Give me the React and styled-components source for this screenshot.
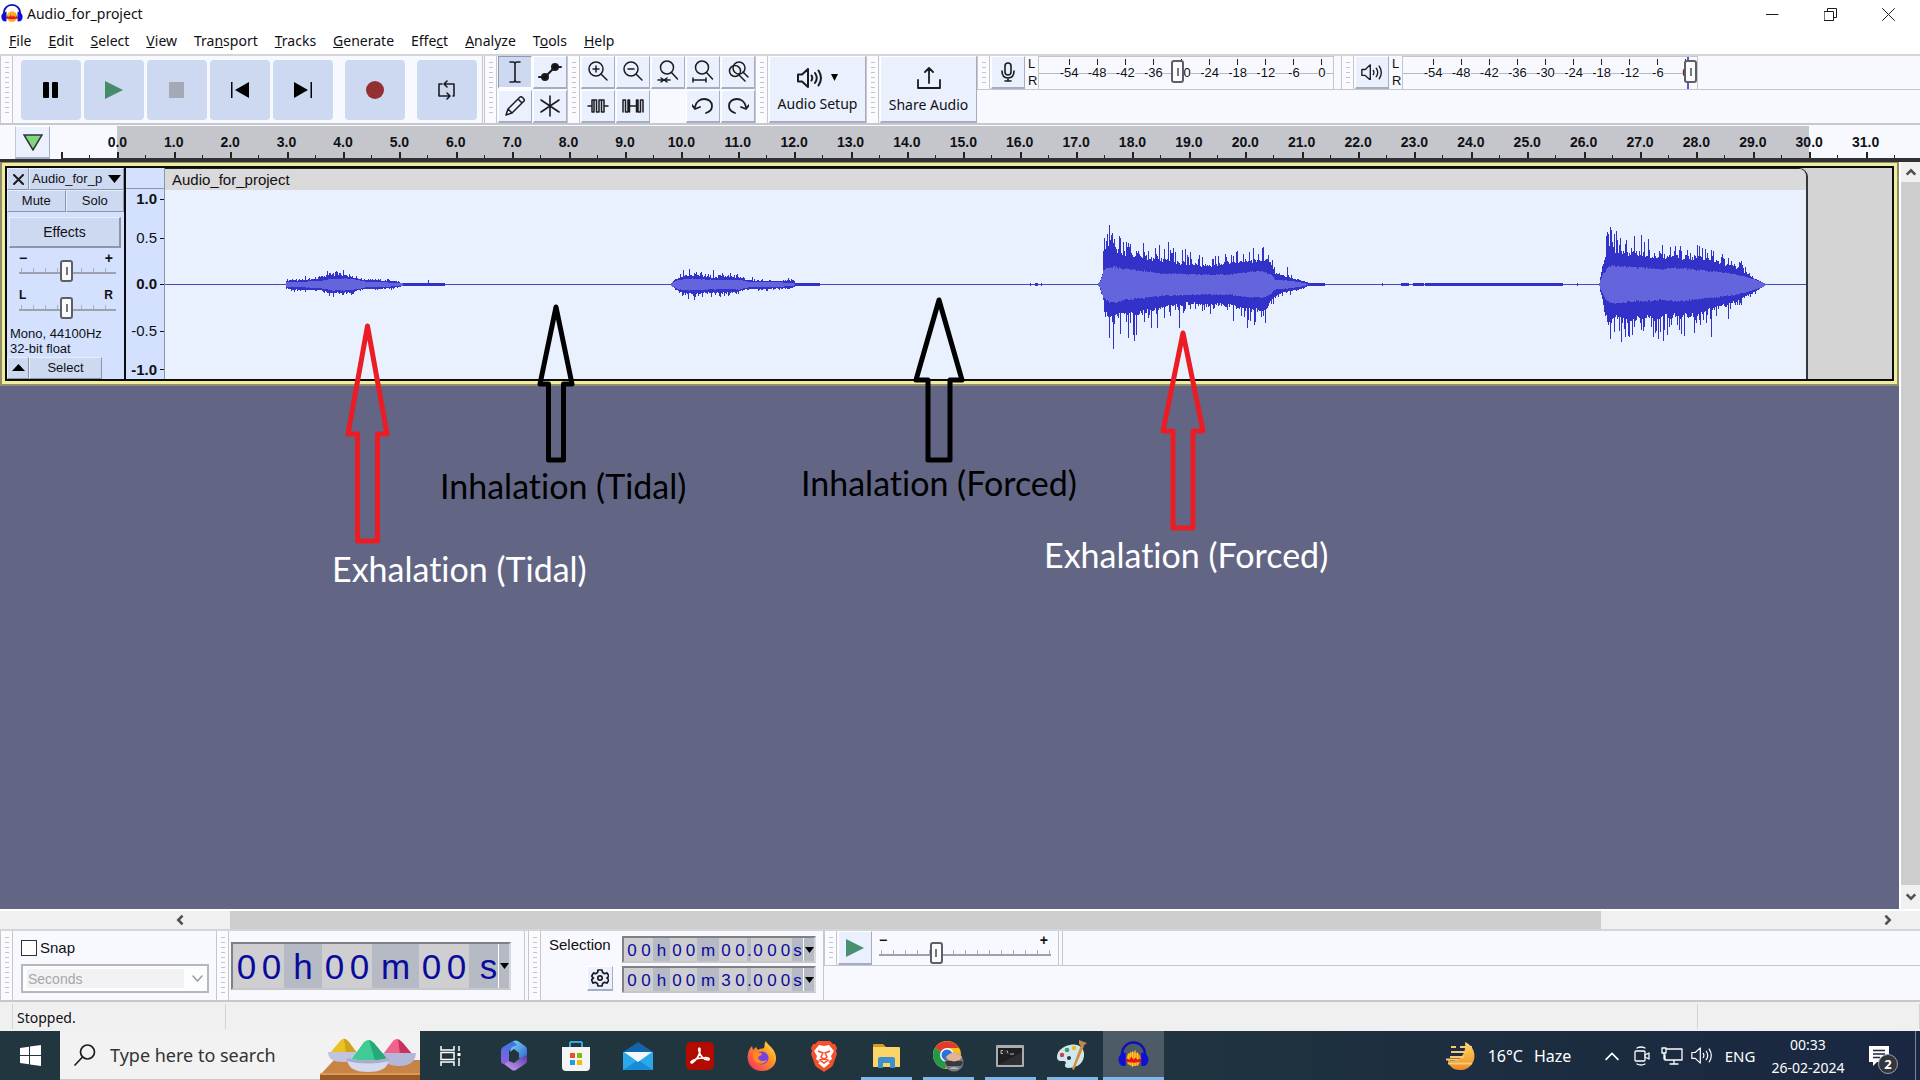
import React from "react";
import styled, { createGlobalStyle } from "styled-components";

const SANS = `"Liberation Sans", Arial, sans-serif`;
const UI = `"Noto Sans", "Open Sans", sans-serif`;

const Global = createGlobalStyle`
  * { box-sizing: border-box; }
  html, body, #root { height: 100%; margin: 0; }
  body { overflow: hidden; background: #f0f0f0; color: #101014; }
  button, input, select { font: inherit; color: inherit; margin: 0; padding: 0; }
  svg { display: block; flex: none; }
`;

const Shell = styled.div`
  display: flex;
  flex-direction: column;
  height: 100vh;
  font: 15px/20px ${UI};
`;

/* ---------- window chrome ---------- */
const TitleBar = styled.header`
  display: flex;
  align-items: center;
  height: 28px;
  padding: 0 3px 0 1px;
  background: #fff;
`;
const TitleText = styled.h1`
  flex: 1;
  margin: 0;
  padding-left: 4px;
  font: 14px/20px ${UI};
`;
const WinButton = styled.button`
  display: grid;
  place-items: center;
  width: 58px;
  height: 28px;
  border: 0;
  background: none;
`;
const MenuBar = styled.nav`
  display: flex;
  align-items: center;
  height: 26px;
  padding-left: 9px;
  gap: 17px;
  background: #fff;
  font-size: 14px;
`;
const MenuItem = styled.a`
  color: inherit;
  text-decoration: none;
  white-space: nowrap;
`;

/* ---------- toolbars ---------- */
const Toolbars = styled.section`
  display: flex;
  height: 71px;
  border-top: 2px solid #d4d5d8;
  border-bottom: 2px solid #c6c8ce;
  background: #f8f9fe;
`;
const Grabber = styled.div`
  flex: none;
  width: 13px;
  padding: 6px 3px 6px 4px;
  border-left: 1px solid #c6c7ca;
  border-right: 1px solid #c6c7ca;
  margin-right: 1px;
  background: #fbfbff;
  &::before {
    content: "";
    display: block;
    height: 100%;
    background: repeating-linear-gradient(#c3c5cc 0 1px, transparent 1px 5px);
  }
`;
const Transport = styled.div`
  display: flex;
  align-items: center;
  padding: 0 5px 0 7px;
  gap: 3px;
  border-right: 1px solid #c6c7ca;
  margin-right: 1px;
`;
const BigButton = styled.button`
  display: grid;
  place-items: center;
  width: 60px;
  height: 60px;
  margin-left: ${(p) => (p.$apart ? "9px" : "0")};
  border: 0;
  border-radius: 4px;
  background: #cdd9f0;
`;
const ToolGrid = styled.div`
  display: grid;
  grid-template-columns: repeat(${(p) => p.$cols}, 34px);
  grid-template-rows: 33px 33px;
  gap: 1px;
`;
const Tool = styled.button`
  display: grid;
  place-items: center;
  border: 1px solid #fff;
  border-right: 1px solid #a5adc0;
  border-bottom: 2px solid #a5adc0;
  background: ${(p) => (p.$on ? "#cdd9f0" : "#eaf0fd")};
  ${(p) => p.$on && "border-color: #8e98b0 #fff #fff #8e98b0;"}
`;
const WideButton = styled(Tool)`
  align-content: center;
  gap: 6px;
  width: 97px;
  padding-top: 3px;
  font-size: 14px;
`;
const IconPair = styled.span`
  display: flex;
  align-items: center;
  gap: 8px;
`;
const MeterArea = styled.div`
  flex: 1;
  display: flex;
  flex-direction: column;
`;
const MeterRow = styled.div`
  display: flex;
  height: 34px;
  border-bottom: 1px solid #c6c7ca;
`;
const MeterButton = styled(Tool)`
  width: 34px;
`;
const Channels = styled.div`
  display: flex;
  flex-direction: column;
  justify-content: space-between;
  width: 14px;
  padding: 0 0 1px 3px;
  border-right: 1px solid #c6c7ca;
  font: 13px/15px ${SANS};
`;
const Meter = styled.div`
  position: relative;
  width: 295px;
  height: 33px;
  padding-left: 16px;
  margin-right: 7px;
  overflow: hidden;
  border-right: 1px solid #c6c7ca;
  border-top: 1px solid #c6c7ca;
  background:
    linear-gradient(#5a5ad0, #5a5ad0) 284px 0 / ${(p) => (p.$peak ? 2 : 0)}px 100% no-repeat,
    linear-gradient(#b9bbc2, #b9bbc2) 0 16px / 100% 1px no-repeat;
`;
const MeterScale = styled.div`
  display: grid;
  grid-template-columns: repeat(10, 1fr);
  width: 281px;
`;
const MeterMark = styled.div`
  display: flex;
  flex-direction: column;
  align-items: center;
  font: 13px/14px ${SANS};
  &::before {
    content: "";
    width: 1px;
    height: 6px;
    margin: 2px 0 1px;
    background: #222;
  }
`;
const MeterLabel = styled.span`
  background: #f8f9fe;
`;
const thumb = (w, h) => `
  -webkit-appearance: none;
  width: ${w}px;
  height: ${h}px;
  border: 2px solid #5c5f66;
  border-radius: 3px;
  background: linear-gradient(#777, #777) center / 2px 8px no-repeat #fbfbfd;
`;
const MeterSlider = styled.input`
  position: absolute;
  left: 0;
  top: 3px;
  width: 100%;
  height: 23px;
  -webkit-appearance: none;
  background: none;
  &::-webkit-slider-thumb { ${thumb(13, 23)} }
`;

/* ---------- timeline ---------- */
const Timeline = styled.div`
  display: flex;
  height: 37px;
  padding: 1px 0 0 15px;
  border-bottom: 3px solid #2e3034;
  background: #f8f9fe;
  overflow: hidden;
`;
const PinButton = styled(Tool)`
  width: 35px;
  margin-right: 11px;
  border-left: 1px solid #c6c7ca;
`;
const RulerScale = styled.div`
  flex: 1;
  display: grid;
  grid-template-columns: repeat(33, 1fr);
  margin-right: -2px;
  font: bold 14px/20px ${SANS};
`;
const RulerCell = styled.div`
  display: flex;
  align-items: flex-end;
  position: relative;
  min-width: 0;
  border-bottom: 1px solid #333;
  background: ${(p) => (p.$sel ? "#c5c6cb" : "transparent")};
  &::before, &::after {
    content: "";
    width: 2px;
    height: 6px;
    background: #222;
  }
  &::after {
    height: 3px;
    width: 1px;
    margin-left: 26px;
  }
`;
const RulerLabel = styled.span`
  position: absolute;
  left: 0;
  top: 6px;
  transform: translateX(-50%);
  z-index: 1;
`;

/* ---------- track area ---------- */
const Workspace = styled.main`
  position: relative;
  flex: 1;
  display: flex;
  min-height: 0;
  background: #626684;
`;
const Canvas = styled.div`
  flex: 1;
  min-width: 0;
`;
const Track = styled.section`
  display: flex;
  height: 224px;
  border: 2px solid #8f8f6c;
  border-top-width: 1px;
  padding: 3px;
  background: #f0ee9c;
`;
const TrackInner = styled.div`
  flex: 1;
  display: flex;
  border: 2px solid #0c0c0c;
  background: #d4d4d4;
  min-width: 0;
`;
const Panel = styled.div`
  width: 119px;
  display: flex;
  flex-direction: column;
  border-right: 2px solid #0c0c0c;
  background: #d3e1fe;
  font: 13px/16px ${SANS};
`;
const PanelRow = styled.div`
  display: flex;
  height: 22px;
  flex: none;
`;
const Flat = styled.button`
  flex: ${(p) => (p.$w ? "none" : "1")};
  width: ${(p) => (p.$w ? p.$w + "px" : "auto")};
  display: flex;
  align-items: center;
  justify-content: center;
  border: 1px solid #e6eefe;
  border-right-color: #8d95a8;
  border-bottom-color: #8d95a8;
  background: #cdd9f0;
`;
const NameButton = styled(Flat)`
  justify-content: space-between;
  padding: 0 2px 0 2px;
`;
const EffectsButton = styled(Flat)`
  flex: none;
  height: 31px;
  margin: 5px 3px 4px 2px;
  border-width: 1px 2px 2px 1px;
  font-size: 14px;
`;
const SliderBlock = styled.label`
  display: flex;
  flex-direction: column;
  height: 37px;
  padding: 0 8px 0 12px;
`;
const Ends = styled.span`
  display: flex;
  justify-content: space-between;
  padding-right: 3px;
  font: bold ${(p) => (p.$big ? "14px" : "12px")}/12px ${SANS};
  height: 12px;
`;
const Slider = styled.input`
  -webkit-appearance: none;
  width: 100%;
  height: 22px;
  margin-top: ${(p) => p.$up || 0}px !important;
  background:
    linear-gradient(#9da1ab, #9da1ab) 0 12px / 100% 2px no-repeat,
    repeating-linear-gradient(90deg, #aab0bd 0 1px, transparent 1px 12px) 2px 8px / 100% 5px no-repeat;
  &::-webkit-slider-thumb { ${thumb(13, 22)} }
`;
const Info = styled.p`
  margin: 0;
  padding: 1px 0 0 3px;
  height: 32px;
  font: 13px/15px ${SANS};
`;
const VScale = styled.div`
  width: 39px;
  display: flex;
  flex-direction: column;
  background: #d3e1fe;
  border-right: 1px solid #8d95a8;
  font: 15px/16px ${SANS};
`;
const VTop = styled.div`
  height: 21px;
  border-bottom: 1px solid #8d95a8;
`;
const VMarks = styled.div`
  flex: 1;
  display: grid;
  grid-template-rows: 20px 58px 34px 60px 17px;
  align-items: center;
`;
const VMark = styled.div`
  display: flex;
  align-items: center;
  justify-content: flex-end;
  gap: 3px;
  font-weight: ${(p) => (p.$b ? "bold" : "normal")};
  &::after {
    content: "";
    width: 4px;
    height: 1px;
    background: #111;
  }
`;
const Clip = styled.article`
  flex: 1;
  min-width: 0;
  display: flex;
  flex-direction: column;
  margin-right: 84px;
  border-top: 1px solid #222;
  border-right: 2px solid #33363c;
  border-top-right-radius: 9px;
  overflow: hidden;
  background: #e9f1ff;
`;
const ClipTitle = styled.h2`
  height: 21px;
  margin: 0;
  padding: 1px 0 0 7px;
  background: #dadada;
  font: 15px/20px ${SANS};
`;
const WaveSvg = styled.svg`
  flex: 1;
  width: 100%;
  min-height: 0;
`;
const VScroll = styled.div`
  width: 21px;
  display: flex;
  flex-direction: column;
  border-left: 2px solid #fff;
  background: #f0f0f0;
`;
const ScrollButton = styled.button`
  display: grid;
  place-items: center;
  flex: none;
  width: ${(p) => p.$w}px;
  height: ${(p) => p.$h}px;
  border: 0;
  background: none;
`;
const VThumb = styled.div`
  flex: 1;
  background: #cdcdcd;
`;
const HScroll = styled.div`
  display: flex;
  height: 22px;
  padding: 0 22px 0 170px;
  border-top: 2px solid #fff;
  border-bottom: 2px solid #d4d5d8;
  background: #f0f0f0;
`;
const HTrack = styled.div`
  flex: 1;
  padding: 0 277px 0 40px;
`;
const HThumb = styled.div`
  height: 100%;
  background: #cdcdcd;
`;

/* ---------- annotations drawn on the canvas ---------- */
const Arrow = styled.svg`
  position: absolute;
  left: ${(p) => p.$x}px;
  top: ${(p) => p.$y}px;
  overflow: visible;
`;
const Note = styled.p`
  position: absolute;
  left: ${(p) => p.$x}px;
  top: ${(p) => p.$y}px;
  margin: 0;
  color: ${(p) => p.$c};
  font: 34px/40px Lato, sans-serif;
  font-variant-ligatures: none;
  white-space: nowrap;
`;

/* ---------- bottom bars ---------- */
const BottomBars = styled.section`
  display: flex;
  height: 71px;
  border-bottom: 2px solid #c6c7ca;
  background: #f8f9fe;
`;
const SnapPanel = styled.div`
  display: flex;
  flex-direction: column;
  width: 202px;
  padding: 7px 7px 0 7px;
  gap: 6px;
  font: 14px/20px ${SANS};
`;
const Check = styled.label`
  display: flex;
  align-items: center;
  gap: 3px;
  font-size: 15px;
  input {
    -webkit-appearance: none;
    width: 16px;
    height: 16px;
    border: 1px solid #333;
    background: #fff;
  }
`;
const Combo = styled.div`
  position: relative;
  svg { position: absolute; right: 6px; top: 11px; pointer-events: none; }
`;
const ComboSelect = styled.select`
  -webkit-appearance: none;
  display: block;
  width: 100%;
  height: 29px;
  padding-left: 5px;
  border: 2px solid #9b9ca0;
  border-radius: 0;
  background: linear-gradient(#f0f0f0, #f0f0f0) 4px 3px / 157px 19px no-repeat #fff;
  color: #82848a;
  font-size: 14px;
`;
const TimePanel = styled.div`
  display: flex;
  align-items: center;
  padding: 0 13px 0 1px;
  border-right: 1px solid #c6c7ca;
  margin-right: 3px;
`;
const TimeBox = styled.div`
  display: flex;
  height: ${(p) => (p.$big ? 48 : 27)}px;
  border: 2px solid #7e8085;
  border-right-color: #d6d8dd;
  border-bottom-color: #c6c7ca;
  color: #0a0a9c;
  background: #b5bac5;
  font: ${(p) => (p.$big ? "35px/46px" : "17px/25px")} ${SANS};
`;
const Cell = styled.span`
  width: ${(p) => p.$w}px;
  text-align: center;
  background: ${(p) => (p.$d ? "#cfcfd1" : "transparent")};
`;
const Drop = styled.button`
  display: grid;
  place-items: center;
  width: 11px;
  border: 0;
  border-left: 1px solid #fff;
  background: #b5bac5;
`;
const SelectionPanel = styled.div`
  display: flex;
  gap: 9px;
  padding: 4px 7px 0 7px;
  border-right: 1px solid #c6c7ca;
`;
const SelLabels = styled.div`
  display: flex;
  flex-direction: column;
  width: 64px;
  gap: 11px;
  font: 15px/20px ${SANS};
`;
const GearButton = styled(Tool)`
  align-self: flex-end;
  width: 26px;
  height: 25px;
`;
const TimeStack = styled.div`
  display: flex;
  flex-direction: column;
  padding-top: 1px;
  gap: 3px;
`;
const SpeedArea = styled.div`
  flex: 1;
`;
const SpeedRow = styled.div`
  display: flex;
  height: 35px;
  border-bottom: 1px solid #c6c7ca;
`;
const SpeedButton = styled(Tool)`
  width: 34px;
`;
const SpeedSlider = styled.label`
  display: flex;
  flex-direction: column;
  width: 187px;
  padding: 3px 7px 0 7px;
  border-right: 1px solid #c6c7ca;
`;
const RowEnd = styled.div`
  width: 4px;
  border-right: 1px solid #c6c7ca;
`;
const StatusBar = styled.footer`
  display: flex;
  align-items: center;
  height: 29px;
  padding: 2px 0;
  background: #f0f0f0;
  font-size: 14px;
`;
const StatusCell = styled.div`
  height: 100%;
  flex: ${(p) => (p.$w ? "none" : "1")};
  width: ${(p) => (p.$w ? p.$w + "px" : "auto")};
  padding: 4px 0 0 4px;
  border-right: 1px solid #d4d4d6;
`;

/* ---------- taskbar ---------- */
const Taskbar = styled.nav`
  display: flex;
  flex: none;
  height: 49px;
  background: linear-gradient(90deg, #22363f 0%, #20343f 60%, #1b2b40 85%, #1a2742 100%);
  color: #fff;
`;
const StartButton = styled.button`
  display: grid;
  place-items: center;
  width: 60px;
  border: 0;
  background: none;
`;
const Search = styled.label`
  display: flex;
  align-items: center;
  width: 360px;
  padding-left: 14px;
  gap: 14px;
  background: #f2f2f2;
  border-bottom: 1px solid #c8cccf;
  color: #222;
`;
const SearchInput = styled.input`
  flex: 1;
  min-width: 0;
  border: 0;
  background: none;
  font: 18px/24px ${UI};
  &::placeholder { color: #333; opacity: 1; }
`;
const Apps = styled.div`
  display: flex;
  flex: 1;
  padding-left: 1px;
`;
const AppButton = styled.button`
  display: grid;
  place-items: center;
  width: ${(p) => (p.$on ? 61 : 62)}px;
  border: 0;
  background:
    ${(p) => (p.$open ? `linear-gradient(#7fb9ea, #7fb9ea) center bottom / ${p.$on ? 61 : 51}px 3px no-repeat` : "none")}
    ${(p) => (p.$on ? "#4d5b66" : "transparent")};
`;
const Tray = styled.div`
  display: flex;
  align-items: center;
  font: 16px/20px ${UI};
`;
const TrayButton = styled.button`
  display: flex;
  align-items: center;
  justify-content: center;
  gap: 11px;
  width: ${(p) => p.$w}px;
  height: 100%;
  border: 0;
  background: none;
  font-size: ${(p) => p.$fs || 16}px;
  white-space: nowrap;
`;
const Clock = styled.button`
  display: flex;
  flex-direction: column;
  justify-content: center;
  align-items: center;
  width: 90px;
  height: 100%;
  border: 0;
  background: none;
  font: 14px/23px ${UI};
`;
const Notices = styled.button`
  position: relative;
  display: flex;
  align-items: center;
  width: 62px;
  height: 100%;
  padding-left: 16px;
  border: 0;
  background: none;
`;
const Badge = styled.span`
  position: absolute;
  left: 25px;
  top: 23px;
  width: 20px;
  height: 20px;
  border: 1px solid #9aa0a6;
  border-radius: 50%;
  background: #32363c;
  font: bold 13px/18px ${UI};
`;
const Peek = styled.div`
  width: 5px;
  height: 100%;
  border-left: 1px solid #7d8794;
`;

/* ---------- icons ---------- */
const Ic = ({ w = 24, h, sw = 2, children, ...r }) => (
  <svg width={w} height={h || w} viewBox={`0 0 ${w} ${h || w}`} fill="none" stroke="#1c1c20" strokeWidth={sw} strokeLinecap="round" strokeLinejoin="round" aria-hidden="true" {...r}>
    {children}
  </svg>
);
const Logo = ({ s = 22 }) => (
  <svg width={s} height={s} viewBox="0 0 30 30" aria-hidden="true">
    <path d="M4 16C2 -2 28 -2 26 16" fill="none" stroke="#1010b8" strokeWidth="2.400" />
    <circle cx="15" cy="18.500" r="7" fill="#f79a12" />
    <path d="M10 13v10M12 12v12M14 11v15M16.500 10v15M19 12v13" stroke="#ffc93c" strokeWidth="1" />
    <path d="M7 19l2-1 2 1 2-3 2 3 2-2 2 2 2-1 2 1v2l-8 1-8-1z" fill="#e01818" />
    <path d="M7.500 12v13c-4 1-7-2-7-6s3-7 7-7zM22.500 12v13c4 1 7-2 7-6s-3-7-7-7z" fill="#1010d4" />
  </svg>
);
const Speaker = ({ s = 26, c = "#1c1c20", sw = 2 }) => (
  <svg width={s} height={(s * 20) / 26} viewBox="0 0 26 20" fill="none" stroke={c} strokeWidth={sw} strokeLinecap="round" strokeLinejoin="round" aria-hidden="true">
    <path d="M1 6.500h4l6-5.500v18l-6-5.500H1z" />
    <path d="M14.500 7.500q1.500 2.500 0 5M18 5q3.500 5 0 10M21.500 2.500q5 7.500 0 15" />
  </svg>
);
const Lens = ({ children }) => (
  <Ic w={24} sw={1.5}>
    <circle cx="10" cy="9" r="7" />
    <path d="M15 14l6 6" />
    {children}
  </Ic>
);
const FitLens = ({ children }) => (
  <Ic w={24} sw={1.5}>
    <circle cx="11" cy="7.500" r="6.500" />
    <path d="M15.500 12.500l6 6.500" />
    {children}
  </Ic>
);
const Chevron = ({ r = 0, c = "#505054", sw = 3, w = 14 }) => (
  <svg width={w} height={w} viewBox="0 0 14 14" fill="none" stroke={c} strokeWidth={sw} transform={`rotate(${r})`} aria-hidden="true">
    <path d="M2 10L7 5l5 5" />
  </svg>
);
const Tri = ({ w = 9, h = 6, up }) => (
  <svg width={w} height={h} viewBox="0 0 10 6" preserveAspectRatio="none" aria-hidden="true">
    <path d={up ? "M0 6h10L5 0z" : "M0 0h10L5 6z"} fill="#000" />
  </svg>
);

/* ---------- waveform ---------- */
// Each burst lists envelope knots [x, height] for peaks above, peaks below and rms, plus single tall samples.
const BURSTS = [
  {
    up: [[286, 3], [290, 4], [305, 4], [320, 6], [328, 9], [345, 9], [356, 6], [364, 4], [380, 4], [395, 3], [399, 2], [402, 1], [444, 1]],
    dn: [[286, 3], [292, 5], [305, 5], [320, 5], [330, 9], [345, 8], [356, 6], [364, 4], [380, 4], [393, 3], [399, 2], [402, 1], [444, 1]],
    rms: [[286, 2], [300, 2], [320, 3], [332, 5], [345, 5], [356, 4], [366, 2], [380, 2], [395, 1], [402, 1], [403, 0], [444, 0]],
    su: { 287: 5, 305: 8, 327: 13, 336: 13, 343: 14, 349: 10, 388: 5, 428: 4 },
    sd: { 294: 7, 333: 12, 343: 10, 391: 5 },
  },
  {
    up: [[671, 1], [676, 5], [684, 9], [695, 9], [712, 7], [725, 8], [738, 7], [746, 4], [770, 3], [792, 4], [795, 1], [819, 1]],
    dn: [[671, 1], [676, 5], [684, 9], [695, 9], [712, 8], [725, 8], [738, 7], [746, 4], [770, 4], [792, 3], [795, 1], [819, 1]],
    rms: [[671, 1], [678, 4], [690, 5], [712, 4], [740, 4], [748, 2], [770, 2], [792, 1], [795, 0], [819, 0]],
    su: { 683: 14, 689: 15, 701: 12, 713: 14, 722: 11, 730: 11, 737: 10, 752: 7, 788: 6 },
    sd: { 688: 14, 694: 15, 711: 12, 720: 12, 728: 11, 766: 6 },
  },
  {
    up: [[1097, 0], [1100, 4], [1102, 9], [1104, 40], [1106, 38], [1118, 35], [1130, 31], [1145, 28], [1160, 26], [1175, 23], [1190, 21], [1205, 19], [1225, 22], [1240, 24], [1255, 25], [1268, 26], [1271, 20], [1275, 11], [1285, 8], [1295, 5], [1303, 3], [1308, 1], [1324, 1]],
    dn: [[1097, 0], [1100, 4], [1102, 10], [1105, 28], [1107, 34], [1115, 33], [1125, 30], [1135, 31], [1145, 28], [1160, 25], [1175, 22], [1190, 19], [1205, 21], [1215, 20], [1230, 22], [1240, 25], [1255, 27], [1265, 28], [1270, 17], [1275, 11], [1283, 8], [1295, 5], [1303, 3], [1308, 1], [1324, 1]],
    rms: [[1097, 0], [1100, 3], [1103, 12], [1106, 15], [1113, 16], [1125, 14], [1145, 12], [1160, 10], [1200, 9], [1230, 9], [1245, 11], [1262, 12], [1270, 9], [1275, 4], [1290, 3], [1303, 1], [1308, 0], [1324, 0]],
    su: { 1104: 46, 1107: 50, 1109: 59, 1112: 48, 1119: 48, 1123: 42, 1128: 41, 1130: 40, 1143: 41, 1159: 39, 1168: 42, 1173: 36, 1182: 34, 1185: 35, 1190: 32, 1199: 29, 1236: 32, 1253: 36, 1262: 36, 1263: 37, 1287: 17 },
    sd: { 1109: 53, 1113: 64, 1120: 49, 1128: 53, 1133: 50, 1134: 56, 1136: 50, 1151: 43, 1157: 43, 1179: 43, 1233: 36, 1247: 43, 1254: 40, 1265: 38, 1290: 10 },
  },
  {
    up: [[1599, 1], [1600, 6], [1602, 20], [1605, 28], [1607, 45], [1611, 42], [1615, 34], [1635, 32], [1650, 30], [1665, 29], [1680, 28], [1695, 28], [1705, 26], [1715, 24], [1725, 20], [1740, 16], [1747, 11], [1755, 5], [1760, 3], [1764, 1]],
    dn: [[1599, 1], [1602, 15], [1605, 32], [1608, 40], [1615, 34], [1625, 38], [1640, 34], [1655, 35], [1665, 33], [1680, 33], [1700, 30], [1712, 24], [1725, 22], [1735, 18], [1745, 12], [1755, 7], [1764, 1]],
    rms: [[1599, 1], [1602, 8], [1607, 15], [1611, 17], [1640, 15], [1660, 14], [1680, 15], [1700, 13], [1730, 10], [1745, 7], [1755, 4], [1764, 1]],
    su: { 1608: 50, 1611: 54, 1616: 53, 1620: 46, 1625: 40, 1634: 48, 1641: 49, 1648: 45, 1662: 39, 1675: 38, 1697: 39, 1702: 35, 1712: 28, 1722: 30, 1741: 23 },
    sd: { 1610: 54, 1621: 57, 1629: 52, 1632: 50, 1653: 52, 1658: 54, 1663: 56, 1667: 50, 1681: 49, 1684: 51, 1694: 48, 1711: 52, 1728: 34 },
  },
];
const FLAT = [[1030, 1030], [1035, 1037], [1041, 1041], [1382, 1382], [1401, 1408], [1413, 1423], [1425, 1562], [1577, 1577]];
const ORIGIN = 165;
const MID = 94;

const lerp = (k, x) => {
  for (let i = 1; i < k.length; i++) {
    if (x <= k[i][0]) {
      const [a, p] = k[i - 1];
      const [b, q] = k[i];
      return p + ((q - p) * (x - a)) / (b - a);
    }
  }
  return k[k.length - 1][1];
};
const noise = (n) => {
  const v = Math.sin(n * 12.9898) * 43758.5453;
  return v - Math.floor(v);
};
function wavePaths() {
  let peak = "";
  let rms = "";
  BURSTS.forEach((b) => {
    const end = b.up[b.up.length - 1][0];
    for (let x = b.up[0][0]; x <= end; x++) {
      const swing = (n) => {
        const r = noise(n);
        return r > 0.75 ? 1.1 + (r - 0.75) * 1.2 : 0.86 + r * 0.25;
      };
      const u = Math.max(b.su[x] || 0, lerp(b.up, x) * swing(x));
      const d = Math.max(b.sd[x] || 0, lerp(b.dn, x) * swing(x + 7000));
      const m = lerp(b.rms, x);
      const X = x - ORIGIN;
      peak += `M${X} ${(MID - u).toFixed(1)}h1V${(MID + 1 + d).toFixed(1)}h-1z`;
      if (m > 0) rms += `M${X} ${(MID - m - noise(x + 99) * m * 0.14).toFixed(1)}h1V${(MID + 1 + m + noise(x + 55) * m * 0.14).toFixed(1)}h-1z`;
    }
  });
  FLAT.forEach(([a, z]) => {
    peak += `M${a - ORIGIN} ${MID - 1}H${z - ORIGIN + 1}v3H${a - ORIGIN}z`;
  });
  return { peak, rms };
}
const WAVE = wavePaths();

const Waveform = () => (
  <WaveSvg viewBox="0 0 1641 189" preserveAspectRatio="none" role="img" aria-label="Waveform">
    <g shapeRendering="crispEdges">
      <rect x="0" y={MID} width="1641" height="1" fill="#4848bc" />
      <path d={WAVE.peak} fill="#3232c8" />
      <path d={WAVE.rms} fill="#6464dc" />
    </g>
  </WaveSvg>
);

const UpArrow = ({ x, y, w, h, head, shaft, color }) => {
  const l = (w - shaft) / 2;
  return (
    <Arrow $x={x} $y={y} width={w} height={h} fill="none" stroke={color} strokeWidth="5" strokeLinejoin="round" aria-hidden="true">
      <path d={`M${w / 2} 0L${w} ${head}H${w - l}V${h}H${l}V${head}H0z`} />
    </Arrow>
  );
};

/* ---------- taskbar pictures ---------- */
const pic = { width: 32, height: 32, viewBox: "0 0 32 32", "aria-hidden": true };
const TaskView = () => (
  <svg {...pic} fill="none" stroke="#fff" strokeWidth="1.500">
    <path d="M5 6v4h13V6M5 26v-4h13v4M5 12.500h13v7H5zM23 6v5M23 18v8" />
    <path d="M23 13v3" strokeWidth="3" />
  </svg>
);
const M365 = () => (
  <svg {...pic}>
    <defs>
      <linearGradient id="ma" x1="0" y1="0" x2="1" y2="1"><stop offset="0" stopColor="#7fd8fa" /><stop offset="1" stopColor="#2a62c9" /></linearGradient>
      <linearGradient id="mb" x1="0" y1="0" x2="0" y2="1"><stop offset="0" stopColor="#3a78e0" /><stop offset="1" stopColor="#8f5fe0" /></linearGradient>
      <linearGradient id="mc" x1="0" y1="1" x2="1" y2="0"><stop offset="0" stopColor="#d0a6f5" /><stop offset="1" stopColor="#5a35a8" /></linearGradient>
    </defs>
    <path d="M15 1L5 7q-2 1-2 4v10q0 3 3 3l5-2V12q0-2 2-3l7-4z" fill="url(#mb)" />
    <path d="M15 1q3-1 5 0l7 5q2 1 2 4v11l-8-3v-5l-5-4-4 3q0-3 2-5l5-2z" fill="url(#ma)" />
    <path d="M6 24l5-3 5 2 5-4 8-4v6q0 2-2 3l-9 6q-2 1-4 0z" fill="url(#mc)" />
  </svg>
);
const Store = () => (
  <svg {...pic}>
    <path d="M10 8V3q0-1 1-1h10q1 0 1 1v5" fill="none" stroke="#35a7e0" strokeWidth="2" />
    <path d="M2 7h28v20q0 4-4 4H6q-4 0-4-4z" fill="#f4f4f4" />
    <path d="M10 13h5v5h-5z" fill="#e8502a" /><path d="M17 13h5v5h-5z" fill="#86b918" />
    <path d="M10 20h5v5h-5z" fill="#1f9fe0" /><path d="M17 20h5v5h-5z" fill="#f7b80c" />
  </svg>
);
const Mail = () => (
  <svg {...pic}>
    <path d="M1 12L16 2l15 10v4H1z" fill="#1464ac" />
    <path d="M1 12h30v18H1z" fill="#2ba8ea" />
    <path d="M1 30l15-10 15 10z" fill="#168cd8" />
    <path d="M2 12h28L16 22z" fill="#f4f7fb" />
  </svg>
);
const Acrobat = () => (
  <svg {...pic}>
    <rect x="2" y="2" width="28" height="28" rx="5" fill="#b30b00" />
    <path d="M8 23c5-3 8-9 8-13 0-3-2-2-1 1 1 5 5 9 9 9 3-1 0-3-5-2-5 0-11 2-12 4 0 1 1 1 1 1z" fill="none" stroke="#fff" strokeWidth="1.700" />
  </svg>
);
const Firefox = () => (
  <svg {...pic}>
    <defs><linearGradient id="ff" x1="1" y1="0" x2="0" y2="1"><stop offset="0" stopColor="#fff04a" /><stop offset=".4" stopColor="#ff9422" /><stop offset="1" stopColor="#f0256c" /></linearGradient></defs>
    <path d="M20 1c1 3 6 6 8 10 6 11-2 20-12 20C6 31 0 23 2 14c0-3 2-6 4-8l1 4 3-3 2 3c2-2 5-1 6-2 1-2 0-5 2-7z" fill="url(#ff)" />
    <circle cx="16" cy="18" r="6.500" fill="#7542e5" />
    <path d="M7 13c3-2 5 0 8 0 2 1 0 3-3 4 0 4 5 5 9 3-2 5-10 5-13 0-1-3-1-5-1-7z" fill="#ff8a1f" />
  </svg>
);
const Brave = () => (
  <svg {...pic}>
    <path d="M10 1h12l3 3h2l2 4-1 3 1 3-4 11q-1 2-3 3l-6 4-6-4q-2-1-3-3L3 14l1-3-1-3 2-4h2z" fill="#f4502a" />
    <path d="M11 5l5 1 5-1 5 6-3 5 1 3-4 3 2 1-6 5-6-5 2-1-4-3 1-3-3-5z" fill="#fff" />
    <path d="M10 11l5 2-2 4 3 2 3-2-2-4 5-2M12 20l4-1 4 1-4 3z" fill="none" stroke="#f4502a" strokeWidth="1.500" />
  </svg>
);
const Explorer = () => (
  <svg {...pic}>
    <path d="M3 5q0-1 1-1h9l3 3H3z" fill="#d79b16" />
    <path d="M3 7h26q1 0 1 1v19H3z" fill="#fbd568" />
    <path d="M8 28V19q0-2 2-2h13q2 0 2 2v9h-5v-5h-7v5z" fill="#3d8fd0" />
  </svg>
);
const Chrome = () => (
  <svg {...pic}>
    <circle cx="15" cy="15" r="14" fill="#f9c21b" />
    <path d="M15 15L2.900 8A14 14 0 0 1 27 8H15z" fill="#e23b2e" />
    <path d="M15 15L2.900 8a14 14 0 0 0 10 20.800L20 19z" fill="#249a48" />
    <circle cx="15" cy="15" r="7" fill="#fff" /><circle cx="15" cy="15" r="5.500" fill="#2c6fe0" />
    <circle cx="22" cy="22" r="9.500" fill="#777b80" />
    <path d="M14 17q8-9 16 0l-3 4H17z" fill="#e0b597" />
    <path d="M13 22q4-3 9 0 5-3 9 0l-2 4H15z" fill="#36393d" />
    <path d="M17 29q5-4 10 0z" fill="#b5b9bd" />
  </svg>
);
const Cmd = () => (
  <svg {...pic}>
    <rect x="2" y="5" width="28" height="22" rx="1" fill="#a9adb0" />
    <rect x="4" y="8" width="24" height="17" fill="#1e1f21" />
    <path d="M9 10.500h-2v3h2M11 11v.5M11 13.500v.3M13 10.500l1 3M16 14h4" stroke="#bbb" strokeWidth="1" fill="none" />
    <path d="M4 25L28 12v13z" fill="#333538" opacity=".7" />
  </svg>
);
const Paint = () => (
  <svg {...pic}>
    <path d="M14 5c8-2 15 3 14 11-1 9-9 12-16 12-3 0-4-3-2-5 0-4-9 1-9-6 0-6 6-11 13-12z" fill="#cfe6f3" />
    <circle cx="6" cy="15" r="2.200" fill="#d63c3c" /><circle cx="11" cy="10" r="2.300" fill="#3aa35a" />
    <circle cx="18" cy="8" r="2.300" fill="#e9bf28" /><circle cx="13" cy="18" r="2" fill="#22343e" />
    <path d="M25 5l3 1-10 24-2-1z" fill="#d58e3a" /><path d="M23 0l8 3-5 4-3-3z" fill="#b98a52" />
  </svg>
);
const Holi = () => (
  <svg width="100" height="49" viewBox="0 0 100 49" aria-hidden="true">
    <path d="M0 44L14 29h86v20H0z" fill="#c88446" /><path d="M0 42h100v7H0z" fill="#9a5a26" /><path d="M0 42h100v2H0z" fill="#dc9a58" />
    <path d="M10 22L20 10q4-5 8 0l9 12z" fill="#ebc226" /><path d="M24 8q3 0 5 3l8 11H26z" fill="#cfa31c" />
    <path d="M8 21h30q0 10-15 10T8 21z" fill="#c0c4de" />
    <path d="M64 22L73 10q4-4 8 0l11 13z" fill="#f0648c" /><path d="M78 8l5 4 9 11H80z" fill="#c8325e" />
    <path d="M62 22h34q-1 13-17 13T62 22z" fill="#b4b8d8" />
    <path d="M31 29L44 11q5-4 9 0l15 18z" fill="#3ecb94" /><path d="M49 9l5 3 14 17H55z" fill="#27a878" />
    <path d="M27 27q21 5 42 0 0 14-21 14T27 27z" fill="#d5d8ee" />
    <path d="M27 27q21 5 42 0v3q-21 5-42 0z" fill="#a6abcf" />
  </svg>
);
const Moon = () => (
  <svg width="32" height="30" viewBox="0 0 32 30" aria-hidden="true">
    <defs><linearGradient id="mo" x1="0" y1="0" x2="0" y2="1"><stop offset="0" stopColor="#ffd95c" /><stop offset="1" stopColor="#ee8a28" /></linearGradient></defs>
    <path d="M20 1c14 6 12 26-3 28C8 30 3 24 3 19c8 3 19-3 17-18z" fill="url(#mo)" />
    <path d="M6 6h5M15 6h12M6 11h16M5 16h14M1 18.500h13M3 22.500h24" stroke="#f7c976" strokeWidth="2" />
  </svg>
);

/* ---------- content ---------- */
const MENUS = [["", "F", "ile"], ["", "E", "dit"], ["", "S", "elect"], ["", "V", "iew"], ["Tra", "n", "sport"], ["", "T", "racks"], ["", "G", "enerate"], ["Effe", "c", "t"], ["", "A", "nalyze"], ["T", "o", "ols"], ["", "H", "elp"]];
const DB = [-54, -48, -42, -36, -30, -24, -18, -12, -6, 0];
const TASKS = [
  ["Microsoft 365", M365], ["Microsoft Store", Store], ["Mail", Mail], ["Acrobat", Acrobat], ["Firefox", Firefox], ["Brave", Brave],
  ["File Explorer", Explorer, 1], ["Chrome", Chrome, 1], ["Command Prompt", Cmd, 1], ["Paint", Paint, 1],
];

const MeterBar = ({ name, value, icon, peak }) => (
  <>
    <Grabber />
    <MeterButton aria-label={name}>{icon}</MeterButton>
    <Channels><span>L</span><span>R</span></Channels>
    <Meter $peak={peak}>
      <MeterScale>
        {DB.map((d) => <MeterMark key={d}><MeterLabel>{d}</MeterLabel></MeterMark>)}
      </MeterScale>
      <MeterSlider type="range" aria-label={`${name} level`} defaultValue={value} />
    </Meter>
  </>
);

const TimeField = ({ big, cells, name }) => (
  <TimeBox $big={big} role="group" aria-label={name}>
    {cells.map(([t, w, d], i) => <Cell key={i} $w={w} $d={d}>{t}</Cell>)}
    <Drop aria-label={`${name} format`}><Tri w={9} h={6} /></Drop>
  </TimeBox>
);
const small = (sec) => [["", 1, 1], ["0", 14, 1], ["0", 14, 1], ["h", 17], ["0", 14, 1], ["0", 13, 1], ["m", 22], [sec, 14, 1], ["0", 14, 1], [".", 4], ["0", 14, 1], ["0", 14, 1], ["0", 13, 1], ["s", 11]];
const large = [["", 1, 1], ["0", 25, 1], ["0", 25, 1], ["h", 38], ["0", 25, 1], ["0", 25, 1], ["m", 47], ["0", 25, 1], ["0", 25, 1], ["", 10], ["s", 19]];

export default function App() {
  return (
    <Shell>
      <Global />
      <TitleBar>
        <Logo />
        <TitleText>Audio_for_project</TitleText>
        <WinButton aria-label="Minimize"><Ic w={13} sw={1}><path d="M0 6.500h12" /></Ic></WinButton>
        <WinButton aria-label="Restore"><Ic w={13} sw={1}><path d="M.5 3.500h9v9h-9zM3.500 3.500v-3h9v9h-3" /></Ic></WinButton>
        <WinButton aria-label="Close"><Ic w={13} sw={1}><path d="M.5.5l12 12M12.500.5l-12 12" /></Ic></WinButton>
      </TitleBar>
      <MenuBar>
        {MENUS.map(([a, u, b]) => <MenuItem key={a + u + b} href="#">{a}<u>{u}</u>{b}</MenuItem>)}
      </MenuBar>

      <Toolbars>
        <Grabber />
        <Transport>
          <BigButton aria-label="Pause"><svg width="16" height="16"><rect width="6" height="16" rx="1" /><rect x="9" width="6" height="16" rx="1" /></svg></BigButton>
          <BigButton aria-label="Play"><svg width="18" height="18"><path d="M0 0l18 9-18 9z" fill="#478a6c" /></svg></BigButton>
          <BigButton aria-label="Stop"><svg width="16" height="16"><rect width="15" height="16" fill="#a5a9b3" /></svg></BigButton>
          <BigButton aria-label="Skip to start"><svg width="18" height="16"><path d="M0 0h1.500v16H0zM18 0v16L4 8z" /></svg></BigButton>
          <BigButton aria-label="Skip to end"><svg width="18" height="16"><path d="M16.500 0H18v16h-1.500zM0 0v16l14-8z" /></svg></BigButton>
          <BigButton aria-label="Record" $apart><svg width="18" height="18"><circle cx="9" cy="9" r="9" fill="#942f33" /></svg></BigButton>
          <BigButton aria-label="Loop" $apart>
            <Ic w={20} sw={1.600}><path d="M5 4H2v12h11M10 13l3 3-3 3M5 4h0M7 4h10v12h-1M10 1L7 4l3 3" /></Ic>
          </BigButton>
        </Transport>
        <Grabber />
        <ToolGrid $cols={2}>
          <Tool $on aria-label="Selection tool"><Ic w={12} h={22} sw={1.600}><path d="M1 1h3q2 0 2 2 0-2 2-2h3M6 3v16M1 21h3q2 0 2-2 0 2 2 2h3" /></Ic></Tool>
          <Tool aria-label="Envelope tool"><Ic w={24} h={18}><path d="M1 14h6l10-10h6" /><circle cx="7" cy="14" r="3" fill="#111" /><circle cx="17" cy="4" r="3" fill="#111" /></Ic></Tool>
          <Tool aria-label="Draw tool"><Ic w={22} sw={1.5}><path d="M2 20l2-6L16 2q1-1 3 1t1 3L8 18zM4 14l4 4M14 4l4 4" /></Ic></Tool>
          <Tool aria-label="Multi-tool"><Ic w={22} sw={1.600}><path d="M11 1v20M2 5l18 12M2 17L20 5" /></Ic></Tool>
        </ToolGrid>
        <Grabber />
        <ToolGrid $cols={5}>
          <Tool aria-label="Zoom in"><Lens><path d="M10 6v6M7 9h6" /></Lens></Tool>
          <Tool aria-label="Zoom out"><Lens><path d="M7 9h6" /></Lens></Tool>
          <Tool aria-label="Fit selection"><FitLens><path d="M2 20h12M5 18l3 2-3 2M11 18l-3 2 3 2" /></FitLens></Tool>
          <Tool aria-label="Fit project"><FitLens><path d="M2 20h13M2 18v4M15 18v4" /></FitLens></Tool>
          <Tool aria-label="Zoom toggle"><Ic w={24} sw={1.5}><circle cx="13" cy="8" r="6" /><circle cx="9" cy="11" r="5.500" /><path d="M17 12l5 5M13 15l6 6" /></Ic></Tool>
          <Tool aria-label="Trim"><Ic w={22} h={16} sw={1.5}><path d="M1 8h4v6h2V2h2.500v12H12V2h2.500v12H17V8h4M5 8V2h2M17 8V2h-2.500" /></Ic></Tool>
          <Tool aria-label="Silence"><Ic w={22} h={16} sw={1.5}><path d="M1 14V2h2.500v12H6V2h1.500v12M7.500 8h7M14.500 14V2H16v12h2.500V2H21v12" /></Ic></Tool>
          <span />
          <Tool aria-label="Undo"><Ic w={22} h={20} sw={1.800}><path d="M3 11C5 0 20 1 20 10c0 4-3 6-6 7M0 9l3 4 5-2" /></Ic></Tool>
          <Tool aria-label="Redo"><Ic w={22} h={20} sw={1.800}><path d="M19 11C17 0 2 1 2 10c0 4 3 6 6 7M22 9l-3 4-5-2" /></Ic></Tool>
        </ToolGrid>
        <Grabber />
        <WideButton><IconPair><Speaker /><Tri w={7} h={7} /></IconPair>Audio Setup</WideButton>
        <Grabber />
        <WideButton><Ic w={24} h={22} sw={1.800}><path d="M1 13v8h22v-8M12 16V1M8 5l4-4 4 4" /></Ic>Share Audio</WideButton>
        <MeterArea>
          <MeterRow>
            <MeterBar name="Recording" value={47} icon={<Ic w={14} h={20} sw={1.600}><rect x="4" y="1" width="6" height="12" rx="3" /><path d="M1 9q0 7 6 7t6-7M7 16v3M4 19h6" /></Ic>} />
            <MeterBar name="Playback" value={100} peak icon={<Speaker s={22} sw={1.600} />} />
          </MeterRow>
        </MeterArea>
      </Toolbars>

      <Timeline>
        <PinButton aria-label="Pinned play head"><svg width="20" height="17"><path d="M1 1h18l-9 15z" fill="#7fd67f" stroke="#333" strokeWidth="1.500" /></svg></PinButton>
        <RulerScale>
          {Array.from({ length: 33 }, (_, i) => (
            <RulerCell key={i} $sel={i > 0 && i < 31}>{i > 0 && <RulerLabel>{(i - 1).toFixed(1)}</RulerLabel>}</RulerCell>
          ))}
        </RulerScale>
      </Timeline>

      <Workspace>
        <Canvas>
          <Track>
            <TrackInner>
              <Panel>
                <PanelRow>
                  <Flat $w={22} aria-label="Close track"><Ic w={11}><path d="M1 1l9 9M10 1l-9 9" /></Ic></Flat>
                  <NameButton>Audio_for_p<Tri w={13} h={8} /></NameButton>
                </PanelRow>
                <PanelRow><Flat>Mute</Flat><Flat>Solo</Flat></PanelRow>
                <EffectsButton>Effects</EffectsButton>
                <SliderBlock>
                  <Ends $big><span>−</span><span>+</span></Ends>
                  <Slider type="range" aria-label="Gain" defaultValue={49} $up={-4} />
                </SliderBlock>
                <SliderBlock>
                  <Ends><span>L</span><span>R</span></Ends>
                  <Slider type="range" aria-label="Pan" defaultValue={49} $up={-4} />
                </SliderBlock>
                <Info>Mono, 44100Hz<br />32-bit float</Info>
                <PanelRow>
                  <Flat $w={22} aria-label="Collapse"><Tri w={13} h={7} up /></Flat>
                  <Flat $w={73}>Select</Flat>
                </PanelRow>
              </Panel>
              <VScale>
                <VTop />
                <VMarks>
                  <VMark $b>1.0</VMark>
                  <VMark>0.5</VMark>
                  <VMark $b>0.0</VMark>
                  <VMark>-0.5</VMark>
                  <VMark $b>-1.0</VMark>
                </VMarks>
              </VScale>
              <Clip>
                <ClipTitle>Audio_for_project</ClipTitle>
                <Waveform />
              </Clip>
            </TrackInner>
          </Track>
        </Canvas>
        <VScroll>
          <ScrollButton $w={19} $h={20} aria-label="Scroll up"><Chevron w={12} /></ScrollButton>
          <VThumb />
          <ScrollButton $w={19} $h={24} aria-label="Scroll down"><Chevron w={12} r={180} /></ScrollButton>
        </VScroll>
        <UpArrow x={348} y={164} w={39} h={215} head={108} shaft={20} color="#ec1c24" />
        <UpArrow x={540} y={145} w={32} h={153} head={77} shaft={15} color="#000" />
        <UpArrow x={916} y={138} w={46} h={160} head={80} shaft={22} color="#000" />
        <UpArrow x={1163} y={171} w={40} h={195} head={98} shaft={20} color="#ec1c24" />
        <Note $x={440} $y={304} $c="#000">Inhalation (Tidal)</Note>
        <Note $x={801} $y={301} $c="#000">Inhalation (Forced)</Note>
        <Note $x={332} $y={387} $c="#fff">Exhalation (Tidal)</Note>
        <Note $x={1044} $y={373} $c="#fff">Exhalation (Forced)</Note>
      </Workspace>

      <HScroll>
        <ScrollButton $w={20} $h={18} aria-label="Scroll left"><Chevron w={12} r={-90} /></ScrollButton>
        <HTrack><HThumb /></HTrack>
        <ScrollButton $w={20} $h={18} aria-label="Scroll right"><Chevron w={12} r={90} /></ScrollButton>
      </HScroll>

      <BottomBars>
        <Grabber />
        <SnapPanel>
          <Check><input type="checkbox" />Snap</Check>
          <Combo>
            <ComboSelect aria-label="Snap to" disabled defaultValue="Seconds"><option>Seconds</option></ComboSelect>
            <Ic w={11} h={7} sw={1.5} stroke="#9a9a9e"><path d="M1 1l4.500 5L10 1" /></Ic>
          </Combo>
        </SnapPanel>
        <Grabber />
        <TimePanel><TimeField big cells={large} name="Audio position" /></TimePanel>
        <Grabber />
        <SelectionPanel>
          <SelLabels>
            <span>Selection</span>
            <GearButton aria-label="Selection settings">
              <Ic w={18} sw={1.700}><path d="M7 1h4l.6 2.500 2 1.200 2.400-.8 2 3.300-2 1.800 2 1.800-2 3.300-2.400-.8-2 1.200L11 17H7l-.6-2.500-2-1.200-2.400.8-1.500-3.300L2.500 9 .6 7.200l2-3.300 2 .8 2-1.200z" /><circle cx="9" cy="9" r="2.200" /></Ic>
            </GearButton>
          </SelLabels>
          <TimeStack>
            <TimeField cells={small("0")} name="Selection start" />
            <TimeField cells={small("3")} name="Selection end" />
          </TimeStack>
        </SelectionPanel>
        <SpeedArea>
          <SpeedRow>
            <Grabber />
            <SpeedButton aria-label="Play at speed"><svg width="18" height="18"><path d="M0 0l18 9-18 9z" fill="#4a8f70" /></svg></SpeedButton>
            <SpeedSlider>
              <Ends $big><span>−</span><span>+</span></Ends>
              <Slider type="range" aria-label="Playback speed" defaultValue={32} $up={-4} />
            </SpeedSlider>
            <RowEnd />
          </SpeedRow>
        </SpeedArea>
      </BottomBars>

      <StatusBar>
        <StatusCell $w={13} />
        <StatusCell $w={213}>Stopped.</StatusCell>
        <StatusCell />
        <StatusCell $w={222} />
      </StatusBar>

      <Taskbar>
        <StartButton aria-label="Start"><svg width="21" height="21" viewBox="0 0 21 21" fill="#fff"><path d="M0 3l9-1.300V10H0zM10 1.500L21 0v10H10zM0 11h9v8.300L0 18zM10 11h11v10l-11-1.500z" /></svg></StartButton>
        <Search>
          <Ic w={22} sw={1.700}><circle cx="13.500" cy="8" r="7" /><path d="M8.500 13L1 21" /></Ic>
          <SearchInput placeholder="Type here to search" aria-label="Search" />
          <Holi />
        </Search>
        <Apps>
          <AppButton aria-label="Task view"><TaskView /></AppButton>
          {TASKS.map(([n, I, open]) => <AppButton key={n} aria-label={n} $open={open}><I /></AppButton>)}
          <AppButton aria-label="Audacity" $open $on><Logo s={31} /></AppButton>
        </Apps>
        <Tray>
          <TrayButton $w={178}><Moon /><span>16°C</span><span>Haze</span></TrayButton>
          <TrayButton $w={30} aria-label="Hidden icons"><Chevron c="#fff" sw={1.3} w={18} /></TrayButton>
          <TrayButton $w={30} aria-label="Camera"><Ic w={18} h={20} sw={1.3} stroke="#fff"><rect x="2" y="5" width="10" height="10" rx="1" /><path d="M12 9l4-2v6l-4-2M4 2q4-2 8 0M4 18q4 2 8 0" /></Ic></TrayButton>
          <TrayButton $w={30} aria-label="Network"><Ic w={22} h={18} sw={1.3} stroke="#fff"><path d="M6 2h15v11H4V8M9 17h8M13 13v4M1 1h4v5H1zM3 6v6" /></Ic></TrayButton>
          <TrayButton $w={30} aria-label="Volume"><Speaker s={22} c="#fff" sw={1.400} /></TrayButton>
          <TrayButton $w={46} $fs={15}>ENG</TrayButton>
          <Clock><span>00:33</span><span>26-02-2024</span></Clock>
          <Notices aria-label="Notifications">
            <svg width="20" height="20"><path d="M0 0h20v16h-12l-4 4v-4H0z" fill="#fff" /><path d="M4 4.500h12M4 8h12M4 11.500h7" stroke="#1a2742" strokeWidth="1.500" /></svg>
            <Badge>2</Badge>
          </Notices>
          <Peek />
        </Tray>
      </Taskbar>
    </Shell>
  );
}
